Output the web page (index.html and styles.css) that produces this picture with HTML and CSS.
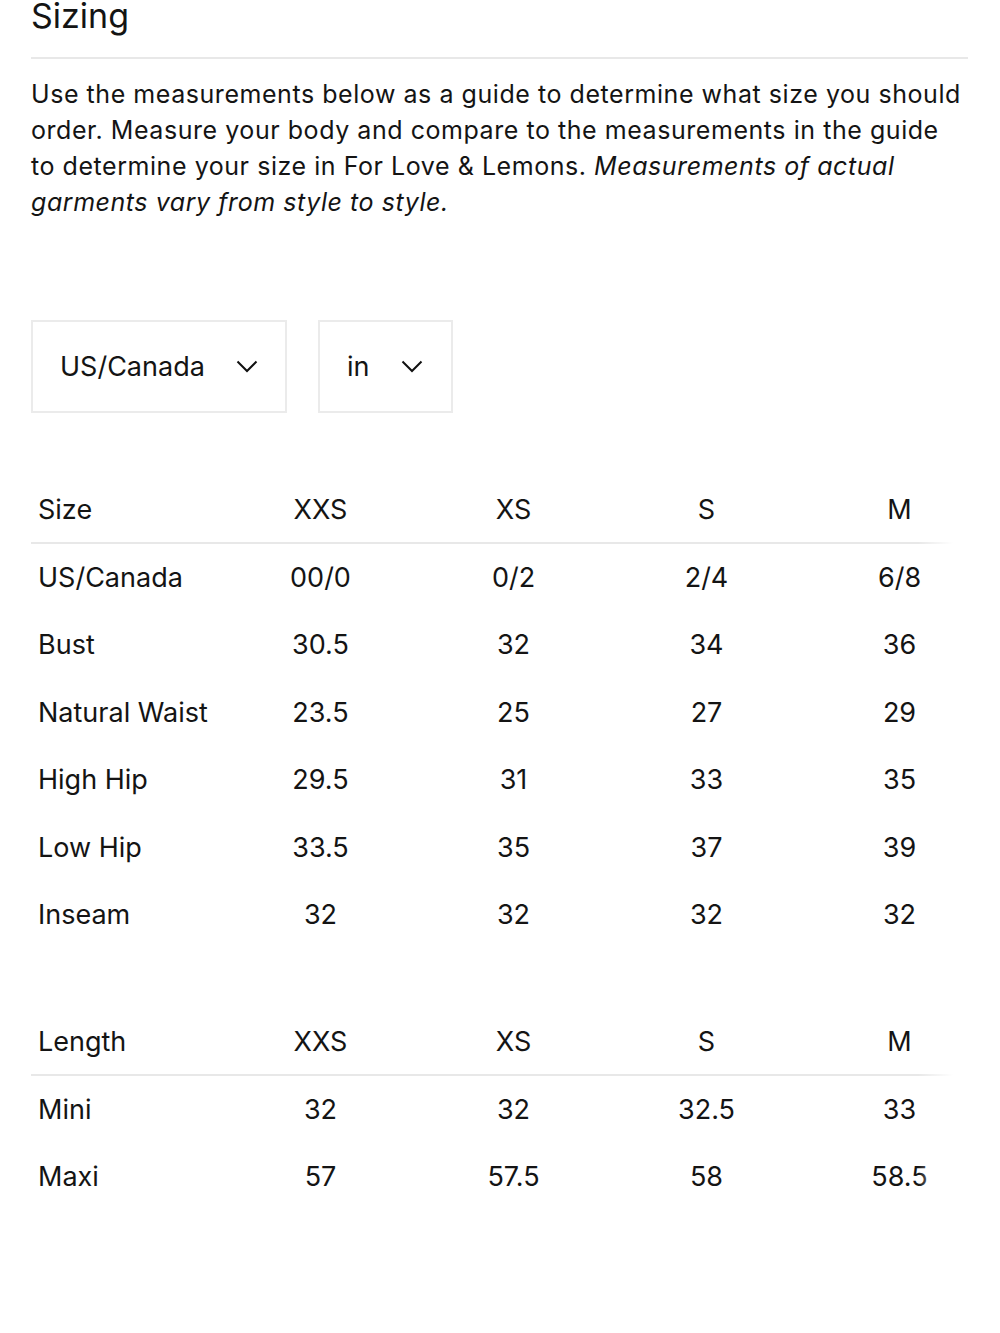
FILE: index.html
```html
<!DOCTYPE html>
<html lang="en">
<head>
<meta charset="utf-8">
<title>Sizing</title>
<link rel="stylesheet" href="styles.css">
</head>
<body>
<main class="page">
  <h1 class="title">Sizing</h1>
  <p class="intro">Use the measurements below as a guide to determine what size you should order. Measure your body and compare to the measurements in the guide to determine your size in For Love &amp; Lemons. <em>Measurements of actual garments vary from style to style.</em></p>

  <div class="selects">
    <div class="select select-region">
      <span>US/Canada</span>
      <svg class="chev" viewBox="0 0 22 13" width="22" height="13"><path d="M1.5 1.5l9.5 9.5 9.5-9.5" fill="none" stroke="#111" stroke-width="2"/></svg>
    </div>
    <div class="select select-unit">
      <span>in</span>
      <svg class="chev" viewBox="0 0 22 13" width="22" height="13"><path d="M1.5 1.5l9.5 9.5 9.5-9.5" fill="none" stroke="#111" stroke-width="2"/></svg>
    </div>
  </div>

  <div class="table-wrap">
    <table class="size-table">
      <thead>
        <tr><th>Size</th><th>XXS</th><th>XS</th><th>S</th><th>M</th></tr>
      </thead>
      <tbody>
        <tr><td>US/Canada</td><td>00/0</td><td>0/2</td><td>2/4</td><td>6/8</td></tr>
        <tr><td>Bust</td><td>30.5</td><td>32</td><td>34</td><td>36</td></tr>
        <tr><td>Natural Waist</td><td>23.5</td><td>25</td><td>27</td><td>29</td></tr>
        <tr><td>High Hip</td><td>29.5</td><td>31</td><td>33</td><td>35</td></tr>
        <tr><td>Low Hip</td><td>33.5</td><td>35</td><td>37</td><td>39</td></tr>
        <tr><td>Inseam</td><td>32</td><td>32</td><td>32</td><td>32</td></tr>
      </tbody>
    </table>
    <div class="fade"></div>
  </div>

  <div class="table-wrap second">
    <table class="size-table">
      <thead>
        <tr><th>Length</th><th>XXS</th><th>XS</th><th>S</th><th>M</th></tr>
      </thead>
      <tbody>
        <tr><td>Mini</td><td>32</td><td>32</td><td>32.5</td><td>33</td></tr>
        <tr><td>Maxi</td><td>57</td><td>57.5</td><td>58</td><td>58.5</td></tr>
      </tbody>
    </table>
    <div class="fade"></div>
  </div>
</main>
</body>
</html>
```

FILE: styles.css
```css
html, body {
  margin: 0;
  padding: 0;
  background: #fff;
}
body {
  font-family: Inter, "Liberation Sans", sans-serif;
  color: #141414;
}
.page {
  padding: 0 32px 0 31px;
}
.title {
  margin: 0;
  font-size: 34px;
  line-height: 32px;
  font-weight: 400;
  padding-bottom: 25px;
  border-bottom: 2px solid #e8e8e8;
}
.intro {
  margin: 17px 0 0;
  font-size: 25px;
  line-height: 36px;
  letter-spacing: 0.55px;
}
.intro em {
  font-style: italic;
}
.selects {
  display: flex;
  gap: 31px;
  margin-top: 100px;
}
.select {
  box-sizing: border-box;
  height: 93px;
  border: 2px solid #ebebeb;
  display: flex;
  align-items: center;
  font-size: 27px;
}
.select-region {
  width: 256px;
  padding-left: 27px;
}
.select-region .chev { margin-left: 31px; }
.select-unit {
  width: 135px;
  padding-left: 27px;
}
.select-unit .chev { margin-left: 31px; }
.table-wrap {
  position: relative;
  overflow: hidden;
  margin-top: 63px;
}
.table-wrap.second {
  margin-top: 60px;
}
.size-table {
  border-collapse: collapse;
  width: 965px;
  table-layout: fixed;
  font-size: 27px;
}
.size-table th,
.size-table td {
  box-sizing: border-box;
  width: 193px;
  height: 67px;
  padding: 0;
  text-align: center;
  font-weight: 400;
  vertical-align: middle;
}
.size-table td {
  height: 67.5px;
  padding-top: 1px;
}
.size-table th:first-child,
.size-table td:first-child {
  text-align: left;
  padding-left: 7px;
}
.size-table thead tr {
  border-bottom: 2px solid #e8e8e8;
}
.fade {
  position: absolute;
  top: 0;
  right: 0;
  bottom: 0;
  width: 50px;
  background: linear-gradient(to right, rgba(255,255,255,0), #fff 70%);
}
```
